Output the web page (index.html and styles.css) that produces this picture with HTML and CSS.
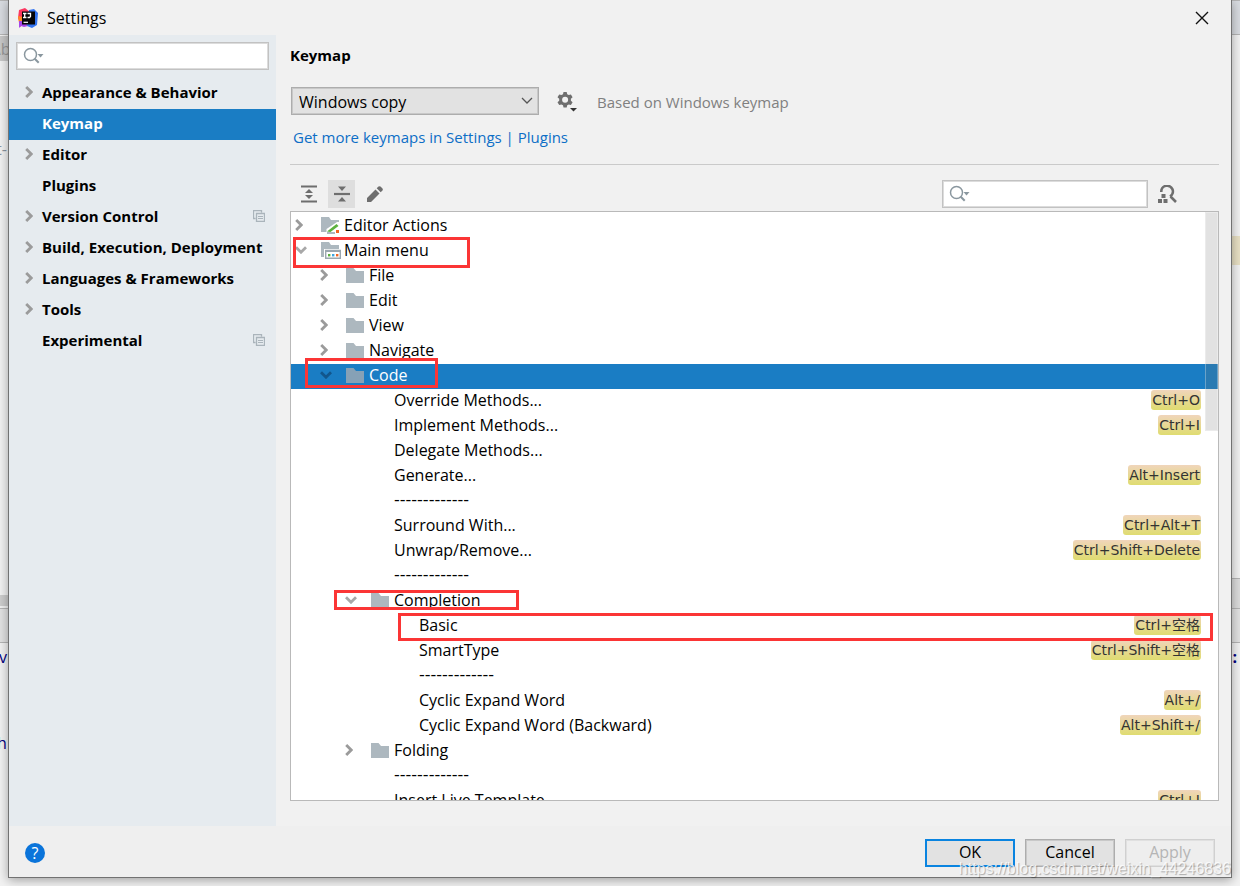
FILE: index.html
```
<!DOCTYPE html>
<html lang="en">
<head>
<meta charset="utf-8">
<title>Settings</title>
<link rel="stylesheet" href="styles.css">
</head>
<body>
<svg class="defs" aria-hidden="true">
  <symbol id="right" viewBox="0 0 8 12"><path d="M1.200 1l5 5-5 5" fill="none" stroke="currentColor" stroke-width="2.800"/></symbol>
  <symbol id="down" viewBox="0 0 12 8"><path d="M1 1.200l5 5 5-5" fill="none" stroke="currentColor" stroke-width="2.800"/></symbol>
  <symbol id="folder" viewBox="0 0 18 15"><path d="M0 0h7.500l2.500 3h8v12H0z" fill="currentColor"/></symbol>
  <symbol id="search" viewBox="0 0 22 18"><circle cx="7.500" cy="7.500" r="6" fill="none" stroke="#8a979f" stroke-width="1.500"/><path d="M11.700 11.700l4 4" stroke="#8a979f" stroke-width="2"/><path d="M14.500 7h6l-3 3.500z" fill="#8a979f"/></symbol>
  <symbol id="copy" viewBox="0 0 12 12"><path d="M2.500 8.500h-2v-8h8v2M3.500 3.500h8v8h-8z" fill="none" stroke="#aab4bb" stroke-width="1.300"/><path d="M5 6.500h5M5 8.500h5" stroke="#aab4bb"/></symbol>
</svg>
<div class="desktop">
  <div class="backdrop" aria-hidden="true">
    <i class="bar top"></i><i class="tab"></i><i class="mark"></i><i class="splitter"></i><i class="strip"></i><i class="bar low"></i>
    <span class="bit crumb">\b</span><span class="bit dash">t-</span>
    <span class="bit code-v">v</span><span class="bit code-h">h</span><span class="bit colon">:</span>
  </div>
  <main class="dialog">
    <header class="titlebar">
      <svg class="logo" viewBox="0 0 20 20"><path d="M1 2l6-2 5 4-6 12-4 3-1-6-1-3z" fill="#fc3660"/><path d="M0 8l5 1 2 5-6 1z" fill="#ff8a25"/><path d="M1 13h6l3 5-4 1-3-1-2 2z" fill="#a646e8"/><path d="M11 2l5-1 4 4-1 12-5 3-5-2z" fill="#3374f0"/><path d="M4 3.500h13v13H4z" fill="#050507"/><path d="M5 5.500h3.500M6.700 5.500v4M5 9.500h3.500M9.500 5.500h3v3l-1 1H9.500" fill="none" stroke="#fff" stroke-width="1.300"/><path d="M5.500 14.300h4.500" stroke="#fff" stroke-width="1.200"/></svg>
      <h1>Settings</h1>
      <button class="close" aria-label="Close"><svg viewBox="0 0 14 14"><path d="M1 1l12 12M13 1L1 13" stroke="#111" stroke-width="1.400"/></svg></button>
    </header>
    <div class="content">
      <aside class="sidebar">
        <label class="field"><svg><use href="#search"/></svg><input type="text" aria-label="Search settings"></label>
        <nav>
          <a href="#"><span class="arrow"><svg class="right"><use href="#right"/></svg></span>Appearance &amp; Behavior</a>
          <a href="#" class="current"><span class="arrow"></span>Keymap</a>
          <a href="#"><span class="arrow"><svg class="right"><use href="#right"/></svg></span>Editor</a>
          <a href="#"><span class="arrow"></span>Plugins</a>
          <a href="#"><span class="arrow"><svg class="right"><use href="#right"/></svg></span>Version Control<svg class="copy"><use href="#copy"/></svg></a>
          <a href="#"><span class="arrow"><svg class="right"><use href="#right"/></svg></span>Build, Execution, Deployment</a>
          <a href="#"><span class="arrow"><svg class="right"><use href="#right"/></svg></span>Languages &amp; Frameworks</a>
          <a href="#"><span class="arrow"><svg class="right"><use href="#right"/></svg></span>Tools</a>
          <a href="#"><span class="arrow"></span>Experimental<svg class="copy"><use href="#copy"/></svg></a>
        </nav>
      </aside>
      <section class="page">
        <h2>Keymap</h2>
        <div class="scheme">
          <div class="combo">
            <select aria-label="Keymap scheme"><option>Windows copy</option></select>
            <svg viewBox="0 0 12 8"><path d="M1 1l5 5 5-5" fill="none" stroke="#555" stroke-width="1.300"/></svg>
          </div>
          <button class="gear" aria-label="Scheme actions"><svg viewBox="0 0 20 20"><path fill="#6e6e6e" fill-rule="evenodd" d="M6.500 0h3.200l.5 2.200 1.600.9 2.100-.7 1.700 2.800-1.700 1.500v2l1.700 1.500-1.700 2.900-2.100-.7-1.600.9-.5 2.200H6.500L6 13.300l-1.600-.9-2.200.7-1.700-2.900 1.700-1.500v-2L.5 5.200l1.700-2.800 2.200.7L6 2.200zM8.100 4.700a3 3 0 1 0 0 6 3 3 0 0 0 0-6z"/><path d="M13 16h7l-3.500 3.500z" fill="#333"/></svg></button>
          <span class="based">Based on Windows keymap</span>
        </div>
        <a href="#" class="more">Get more keymaps in Settings | Plugins</a>
        <hr>
        <div class="toolbar">
          <button class="tool" aria-label="Expand All"><svg viewBox="0 0 18 18"><path d="M1 1.500h16M1 16.500h16" stroke="#6e6e6e" stroke-width="2.200"/><path d="M9 4l4 4H5zM9 14l4-4H5z" fill="#6e6e6e"/></svg></button>
          <button class="tool on" aria-label="Collapse All"><svg viewBox="0 0 18 18"><path d="M1 9h16" stroke="#6e6e6e" stroke-width="2.200"/><path d="M9 6l4-4.500H5zM9 12l4 4.500H5z" fill="#6e6e6e"/></svg></button>
          <button class="tool" aria-label="Edit Shortcut"><svg viewBox="0 0 18 18"><path d="M1 13L9.500 4.500l4 4L5 17H1zM10.700 3.300l1.800-1.700q1-.8 2 0l2 2q.8 1 0 2l-1.800 1.700z" fill="#6e6e6e"/></svg></button>
          <label class="field find"><svg><use href="#search"/></svg><input type="text" aria-label="Search actions"></label>
          <button class="tool by-key" aria-label="Find Actions by Shortcut"><svg viewBox="0 0 20 18"><path d="M3.300 7A5.800 5.800 0 1 1 12 11.500M12.500 11.500l5.500 5.500" fill="none" stroke="#6e6e6e" stroke-width="2.600"/><path d="M3.500 9h4v4h-4zM0 14h4v4H0zM5.500 14h4v4h-4z" fill="#6e6e6e"/></svg></button>
        </div>
        <div class="tree">
          <ul>
            <li class="l0"><svg class="right"><use href="#right"/></svg><svg class="rich" viewBox="0 0 20 17"><path d="M0 0h8l2 3h8v12H0z" fill="#adb8bf"/><path d="M5.500 17v-5L16 5h4v12z" fill="#fff"/><path d="M6 14.500L15.500 7l2 2-8 6z" fill="#5bb13f"/><path d="M6 16h8" stroke="#adb8bf" stroke-width="2"/><path d="M15 13h3v3h-3z" fill="#f26522"/></svg>Editor Actions</li>
            <li class="l0"><svg class="down"><use href="#down"/></svg><svg class="rich" viewBox="0 0 20 17"><path d="M0 0h8l2 3h8v12H0z" fill="#adb8bf"/><path d="M3 7h17v10H3z" fill="#fff"/><path d="M4.700 8.500h14.600v7.800H4.700z" fill="#fff" stroke="#9aa7b0" stroke-width="1.400"/><path d="M4.700 9h14.600" stroke="#9aa7b0" stroke-width="2"/><path d="M7 12h2.400v2.400H7z" fill="#5bb13f"/><path d="M11 12h2.400v2.400H11z" fill="#40a6df"/><path d="M15 12h2.400v2.400H15z" fill="#f26522"/></svg>Main menu</li>
            <li class="l1"><svg class="right"><use href="#right"/></svg><svg class="folder"><use href="#folder"/></svg>File</li>
            <li class="l1"><svg class="right"><use href="#right"/></svg><svg class="folder"><use href="#folder"/></svg>Edit</li>
            <li class="l1"><svg class="right"><use href="#right"/></svg><svg class="folder"><use href="#folder"/></svg>View</li>
            <li class="l1"><svg class="right"><use href="#right"/></svg><svg class="folder"><use href="#folder"/></svg>Navigate</li>
            <li class="l1 selected"><svg class="down"><use href="#down"/></svg><svg class="folder"><use href="#folder"/></svg>Code</li>
            <li class="leaf">Override Methods...<kbd>Ctrl+O</kbd></li>
            <li class="leaf">Implement Methods...<kbd>Ctrl+I</kbd></li>
            <li class="leaf">Delegate Methods...</li>
            <li class="leaf">Generate...<kbd>Alt+Insert</kbd></li>
            <li class="leaf sep">-------------</li>
            <li class="leaf">Surround With...<kbd>Ctrl+Alt+T</kbd></li>
            <li class="leaf">Unwrap/Remove...<kbd>Ctrl+Shift+Delete</kbd></li>
            <li class="leaf sep">-------------</li>
            <li class="l2"><svg class="down"><use href="#down"/></svg><svg class="folder"><use href="#folder"/></svg>Completion</li>
            <li class="leaf deep">Basic<kbd>Ctrl+空格</kbd></li>
            <li class="leaf deep">SmartType<kbd>Ctrl+Shift+空格</kbd></li>
            <li class="leaf deep sep">-------------</li>
            <li class="leaf deep">Cyclic Expand Word<kbd>Alt+/</kbd></li>
            <li class="leaf deep">Cyclic Expand Word (Backward)<kbd>Alt+Shift+/</kbd></li>
            <li class="l2"><svg class="right"><use href="#right"/></svg><svg class="folder"><use href="#folder"/></svg>Folding</li>
            <li class="leaf sep">-------------</li>
            <li class="leaf">Insert Live Template<kbd>Ctrl+J</kbd></li>
          </ul>
          <i class="thumb"></i>
          <i class="note note-menu"></i><i class="note note-code"></i><i class="note note-completion"></i><i class="note note-basic"></i>
        </div>
      </section>
    </div>
    <footer>
      <button class="help" aria-label="Help">?</button>
      <button class="btn primary">OK</button>
      <button class="btn">Cancel</button>
      <button class="btn" disabled>Apply</button>
    </footer>
  </main>
  <span class="watermark">https://blog.csdn.net/weixin_44246836</span>
</div>
</body>
</html>
```
FILE: styles.css
```
* { box-sizing: border-box; }
body { margin: 0; font: 16px/22px "Open Sans", "Noto Sans", "Noto Sans CJK SC", sans-serif; color: #000; }
button, input, select { font: inherit; color: inherit; }
button { padding: 0; border: 0; background: none; display: flex; align-items: center; justify-content: center; }
svg { display: block; flex: none; }
a { text-decoration: none; color: inherit; }
h1, h2 { margin: 0; font-size: 15px; }
.defs { position: absolute; width: 0; height: 0; }

.desktop { position: relative; height: 100vh; min-height: 600px; padding: 0 8px 8px; background: #f2f2f2; overflow: hidden; display: flex; }

/* slivers of the editor window behind the dialog */
.backdrop { position: absolute; inset: 0; }
.backdrop i, .bit { position: absolute; }
.bar { left: 0; right: 0; }
.bar.top { top: 0; height: 35px; background: #d8dbe0; border-top: 1px solid #b5b5b5; border-bottom: 1px solid #b5b5b5; }
.bar.low { top: 608px; height: 35px; background: #e2e2e2; border-top: 1px solid #b5b5b5; border-bottom: 1px solid #b5b5b5; }
.tab { left: 0; top: 36px; width: 8px; height: 25px; background: #c8c8c8; }
.mark { right: 0; top: 236px; width: 8px; height: 29px; background: #e8e0c4; }
.splitter { left: 0; top: 595px; width: 8px; height: 11px; background: #cdcdcd; }
.strip { right: 0; top: 578px; width: 8px; height: 30px; background: #dcdcdc; border-top: 1px solid #b5b5b5; }
.bit { color: #000080; }
.crumb { left: -5px; top: 38px; color: #999; }
.dash { left: -4px; top: 138px; color: #8a94a0; }
.code-v { left: -1px; top: 646px; }
.code-h { left: -3px; top: 732px; }
.colon { right: 3px; top: 646px; font-weight: 700; }

.dialog { position: relative; flex: 1; min-width: 0; display: flex; flex-direction: column; background: #f1f1f1; border: 1px solid #727272; border-top: 0; box-shadow: 0 2px 10px rgba(0,0,0,.35); }
.titlebar { height: 35px; display: flex; align-items: center; padding: 0 22px 0 9px; gap: 9px; }
.titlebar h1 { font-size: 16px; font-weight: 400; flex: 1; }
.logo { width: 20px; height: 20px; }
.close svg { width: 14px; height: 14px; }
.content { flex: 1; min-height: 0; display: flex; }

.sidebar { width: 267px; flex: none; background: #e6ebef; padding-top: 7px; }
.field { display: flex; align-items: center; height: 28px; padding-left: 6px; background: #fff; border: 1px solid #c2c2c2; box-shadow: inset 0 0 0 1px #dcdcdc; }
.field svg { width: 22px; height: 18px; }
.field input { flex: 1; min-width: 0; border: 0; outline: 0; background: none; }
.sidebar .field { margin: 0 7px 8px; }
nav a { display: flex; align-items: center; height: 31px; padding: 0 11px 3px 16px; font-size: 15px; font-weight: 700; white-space: nowrap; }
.arrow { width: 17px; }
.right { width: 8px; height: 12px; color: #9b9b9b; }
.down { width: 12px; height: 8px; color: #a8a8a8; }
.copy { width: 12px; height: 12px; margin-left: auto; }
.current { background: #1a7dc4; color: #fff; }

.page { flex: 1; min-width: 0; padding: 9px 12px 25px 14px; display: flex; flex-direction: column; }
.scheme { display: flex; align-items: center; margin-top: 21px; padding-left: 1px; }
.combo { position: relative; width: 248px; }
.combo select { display: block; width: 100%; height: 28px; padding: 2px 7px 0; appearance: none; background: #e2e2e2; border: 1px solid #adadad; box-shadow: inset 0 0 0 1px #c8c8c8; border-radius: 0; }
.combo svg { position: absolute; right: 6px; top: 10px; width: 12px; height: 8px; pointer-events: none; }
.gear { margin: 2px 20px 0 18px; }
.gear svg { width: 20px; height: 20px; }
.based { padding-top: 2px; font-size: 15px; color: #808080; }
.more { align-self: flex-start; margin: 11px 0 0 3px; font-size: 15px; color: #0d6ec6; }
hr { width: 100%; height: 1px; margin: 16px 0 15px; border: 0; background: #cacaca; }
.toolbar { display: flex; align-items: center; height: 28px; padding-left: 5px; gap: 6px; }
.tool { width: 27px; height: 28px; }
.tool svg { width: 18px; height: 18px; }
.tool.on { background: #dedede; }
.find { width: 206px; margin-left: auto; }
.by-key { margin-right: 38px; }
.by-key svg { width: 20px; height: 18px; }

.tree { position: relative; flex: 1; min-height: 0; margin-top: 3px; background: #fff; border: 1px solid #b9b9b9; overflow: hidden; }
.tree ul { list-style: none; margin: 0; padding: 2px 0 0; }
.tree li { display: flex; align-items: center; height: 25px; padding-right: 17px; padding-bottom: 3px; white-space: nowrap; }
.tree .right { margin: 0 18px 0 4px; }
.tree .down { margin: 0 14px 0 4px; }
.rich { width: 20px; height: 17px; margin-right: 3px; }
.folder { width: 18px; height: 15px; margin-right: 5px; color: #adb8bf; }
.l1 { padding-left: 25px; }
.l2 { padding-left: 50px; }
.leaf { padding-left: 103px; }
.deep { padding-left: 128px; }
.sep { font-family: "DejaVu Sans", sans-serif; }
.selected { background: #1a7dc4; color: #fff; }
.selected .down { color: #12568c; }
.selected .folder { color: #86a1b6; }
kbd { margin-left: auto; height: 20px; padding: 0 1px; border-radius: 3px; font: 14px/21px "DejaVu Sans", "Noto Sans CJK SC", sans-serif; color: #333; background: linear-gradient(#f0d5bb, #dfdc70); }
.thumb { position: absolute; right: 0; top: 0; width: 13px; height: 219px; background: rgba(110,110,110,.2); border: 1px solid rgba(255,255,255,.3); }
.note { position: absolute; border: 3px solid #fb3535; }
.note-menu { left: 2px; top: 25px; width: 177px; height: 31px; }
.note-code { left: 14px; top: 146px; width: 133px; height: 30px; }
.note-completion { left: 43px; top: 378px; width: 185px; height: 20px; }
.note-basic { left: 107px; right: 5px; top: 401px; height: 28px; }

footer { height: 51px; display: flex; align-items: center; gap: 10px; padding: 2px 16px 0; background: #efefef; }
.help { width: 20px; height: 20px; margin-right: auto; border-radius: 50%; background: #0a74da; color: #fff; }
.btn { width: 90px; height: 28px; padding-bottom: 2px; background: #e2e2e2; border: 1px solid #adadad; box-shadow: inset 0 0 0 1px #c8c8c8; }
.primary { border: 2px solid #0a84e0; box-shadow: none; }
.btn:disabled { background: #eee; border-color: #d0d0d0; box-shadow: inset 0 0 0 1px #e0e0e0; color: #b5b5b5; }
.watermark { position: absolute; right: 9px; bottom: 7px; font: 16px/20px "Liberation Sans", Arial, sans-serif; color: rgba(255,255,255,.8); text-shadow: 1px 1px 1px rgba(0,0,0,.3); pointer-events: none; }
```
